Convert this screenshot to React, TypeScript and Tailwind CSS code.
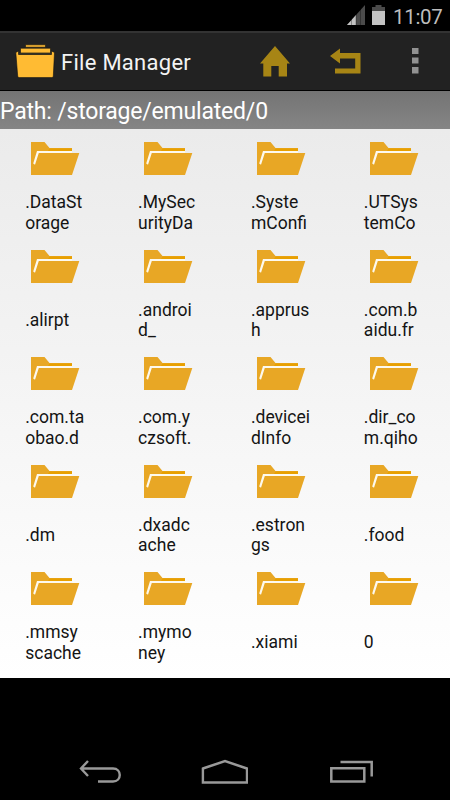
import React from 'react';

interface Folder {
	id: string;
	lines: string[];
}

const folders: Folder[] = [
	{ id: 'data', lines: ['.DataSt', 'orage'] },
	{ id: 'security', lines: ['.MySec', 'urityDa'] },
	{ id: 'system', lines: ['.Syste', 'mConfi'] },
	{ id: 'utsystem', lines: ['.UTSys', 'temCo'] },
	{ id: 'alirpt', lines: ['.alirpt'] },
	{ id: 'android', lines: ['.androi', 'd_'] },
	{ id: 'apprush', lines: ['.apprus', 'h'] },
	{ id: 'baidu', lines: ['.com.b', 'aidu.fr'] },
	{ id: 'taobao', lines: ['.com.ta', 'obao.d'] },
	{ id: 'yczsoft', lines: ['.com.y', 'czsoft.'] },
	{ id: 'device', lines: ['.devicei', 'dInfo'] },
	{ id: 'qiho', lines: ['.dir_co', 'm.qiho'] },
	{ id: 'dm', lines: ['.dm'] },
	{ id: 'dxad', lines: ['.dxadc', 'ache'] },
	{ id: 'estrongs', lines: ['.estron', 'gs'] },
	{ id: 'food', lines: ['.food'] },
	{ id: 'mmsys', lines: ['.mmsy', 'scache'] },
	{ id: 'mymoney', lines: ['.mymo', 'ney'] },
	{ id: 'xiami', lines: ['.xiami'] },
	{ id: 'zero', lines: ['0'] },
];

const FolderIcon: React.FC = () => (
	<svg width="49" height="34" viewBox="0 0 49 34" className="block shrink-0" aria-hidden="true">
		<path d="M0 0H13.5L18.5 6H41V9H6.3V11H48.3L41 33H0Z" fill="#e8a725" />
		<path d="M18.5 6.5H41V9H17Z" fill="#e8a000" />
		<path d="M2.2 21.5L6 9H41V11H7.8L4 22.8Z" fill="#fdf9ee" />
	</svg>
);

const StatusBar: React.FC = () => (
	<div className="flex h-[31px] items-center justify-end bg-black">
		<svg width="18" height="20" viewBox="0 0 18 20" className="mr-[7px] mb-[1px]" aria-hidden="true">
			<path d="M0 20L18 0V20Z" fill="#4b4b4b" />
			<path d="M0 20L9 10V20Z" fill="#c3c3c3" />
			<path d="M4.5 12V20M9 8V20M13.5 4V20" stroke="#000" strokeOpacity=".45" strokeWidth=".7" />
		</svg>
		<svg width="13" height="20" viewBox="0 0 13 20" className="mr-[8px] mb-[1px]" aria-hidden="true">
			<path d="M3.5 0H9.5V2H13V6H0V2H3.5Z" fill="#4b4b4b" />
			<path d="M0 6H13V20H0Z" fill="#c3c3c3" />
		</svg>
		<span className="mr-[8px] w-[49px] whitespace-nowrap pt-[2px] text-[20.5px] leading-[24px] tracking-[-0.3px] text-[#bdbdbd]">11:07</span>
	</div>
);

const ActionBar: React.FC = () => (
	<header className="flex h-[60px] items-center border-t-2 border-b border-t-[#333] border-b-black bg-[#222]">
		<svg width="40" height="35" viewBox="0 0 40 35" className="ml-[15px] shrink-0" aria-hidden="true">
			<path d="M10.5 .8H30.5V3.2H10.5ZM5.5 4.2H35.5V9H5.5Z" fill="#ffbb33" stroke="#111" strokeWidth=".6" />
			<path
				d="M.8 8.5L3.5 7V10.5H36.5V7L39.5 8.5L38.3 32.3Q38.2 33.6 36.8 33.6H4.3Q2.9 33.6 2.7 32.3Z"
				fill="#ffbb33"
				stroke="#111"
				strokeWidth=".6"
			/>
			<path d="M4 9.8H36" stroke="#333022" strokeWidth="1.7" />
		</svg>
		<h1 className="ml-[6px] w-[199px] whitespace-nowrap pt-[2px] text-[22px] leading-[28px] tracking-[0.28px] text-[#f3f3f3]">File Manager</h1>
		<svg width="30" height="31" viewBox="0 0 30 31" className="shrink-0" aria-hidden="true">
			<path d="M15 0L30 17.5H27V30.5H18.7V20H11.3V30.5H3.3V17.5H0Z" fill="#a78515" />
		</svg>
		<svg width="31" height="26" viewBox="0 0 31 26" className="mb-[1px] ml-[40px] shrink-0" aria-hidden="true">
			<path d="M0 8L10 .5V5H30.5V25.5H5V20.5H25.2V10.5H10V15.5Z" fill="#a78515" />
		</svg>
		<svg width="7" height="26" viewBox="0 0 7 26" className="mb-[1px] ml-[51px] shrink-0" aria-hidden="true">
			<path d="M0 0H6.5V6H0ZM0 9.5H6.5V15.5H0ZM0 19H6.5V25.5H0Z" fill="#929292" />
		</svg>
	</header>
);

const NavigationBar: React.FC = () => (
	<footer className="flex h-[57px] items-center bg-black">
		<svg width="43" height="24" viewBox="0 0 43 24" className="ml-[79px]" fill="none" stroke="#999" strokeWidth="2.4" aria-hidden="true">
			<path d="M9 1L2 8.5L9 16M2 8.5H34C43 8.5 43 21.5 34 21.5H19" />
		</svg>
		<svg width="47" height="26" viewBox="0 0 47 26" className="ml-[79px]" fill="none" stroke="#999" strokeWidth="2.4" aria-hidden="true">
			<path d="M1.9 9.5L24 2L46 9.5V23.5H1.9Z" />
		</svg>
		<svg width="44" height="24" viewBox="0 0 44 24" className="ml-[81px]" fill="none" stroke="#999" strokeWidth="2.5" aria-hidden="true">
			<path d="M2.3 8.3H35.3V21.5H2.3ZM11.5 2H42.7V16.5" />
		</svg>
	</footer>
);

const App: React.FC = () => {
	return (
		<div className="flex h-[800px] w-[450px] flex-col overflow-hidden bg-black font-['Roboto',sans-serif]">
			<StatusBar />
			<ActionBar />
			<div className="h-[38px] whitespace-nowrap bg-gradient-to-b from-[#747474] to-[#858585] text-[23px] leading-[41px] tracking-[-0.2px] text-white">
				Path: /storage/emulated/0
			</div>
			<main className="grid h-[549px] auto-rows-[107.5px] grid-cols-[repeat(4,112.9px)] bg-gradient-to-b from-[#ebebeb] to-white pt-[13px]">
				{folders.map(({ id, lines }) => (
					<div key={id} className="flex flex-col pl-[25.2px]">
						<div className="pl-[5.8px]">
							<FolderIcon />
						</div>
						<div className="mt-[16px] flex h-[41px] flex-col justify-center whitespace-nowrap text-[17.5px] leading-[20.5px] text-[#141414]">
							{lines.map((line) => (
								<span key={line}>{line}</span>
							))}
						</div>
					</div>
				))}
			</main>
			<div className="flex-1" />
			<NavigationBar />
		</div>
	);
};

export default App;
